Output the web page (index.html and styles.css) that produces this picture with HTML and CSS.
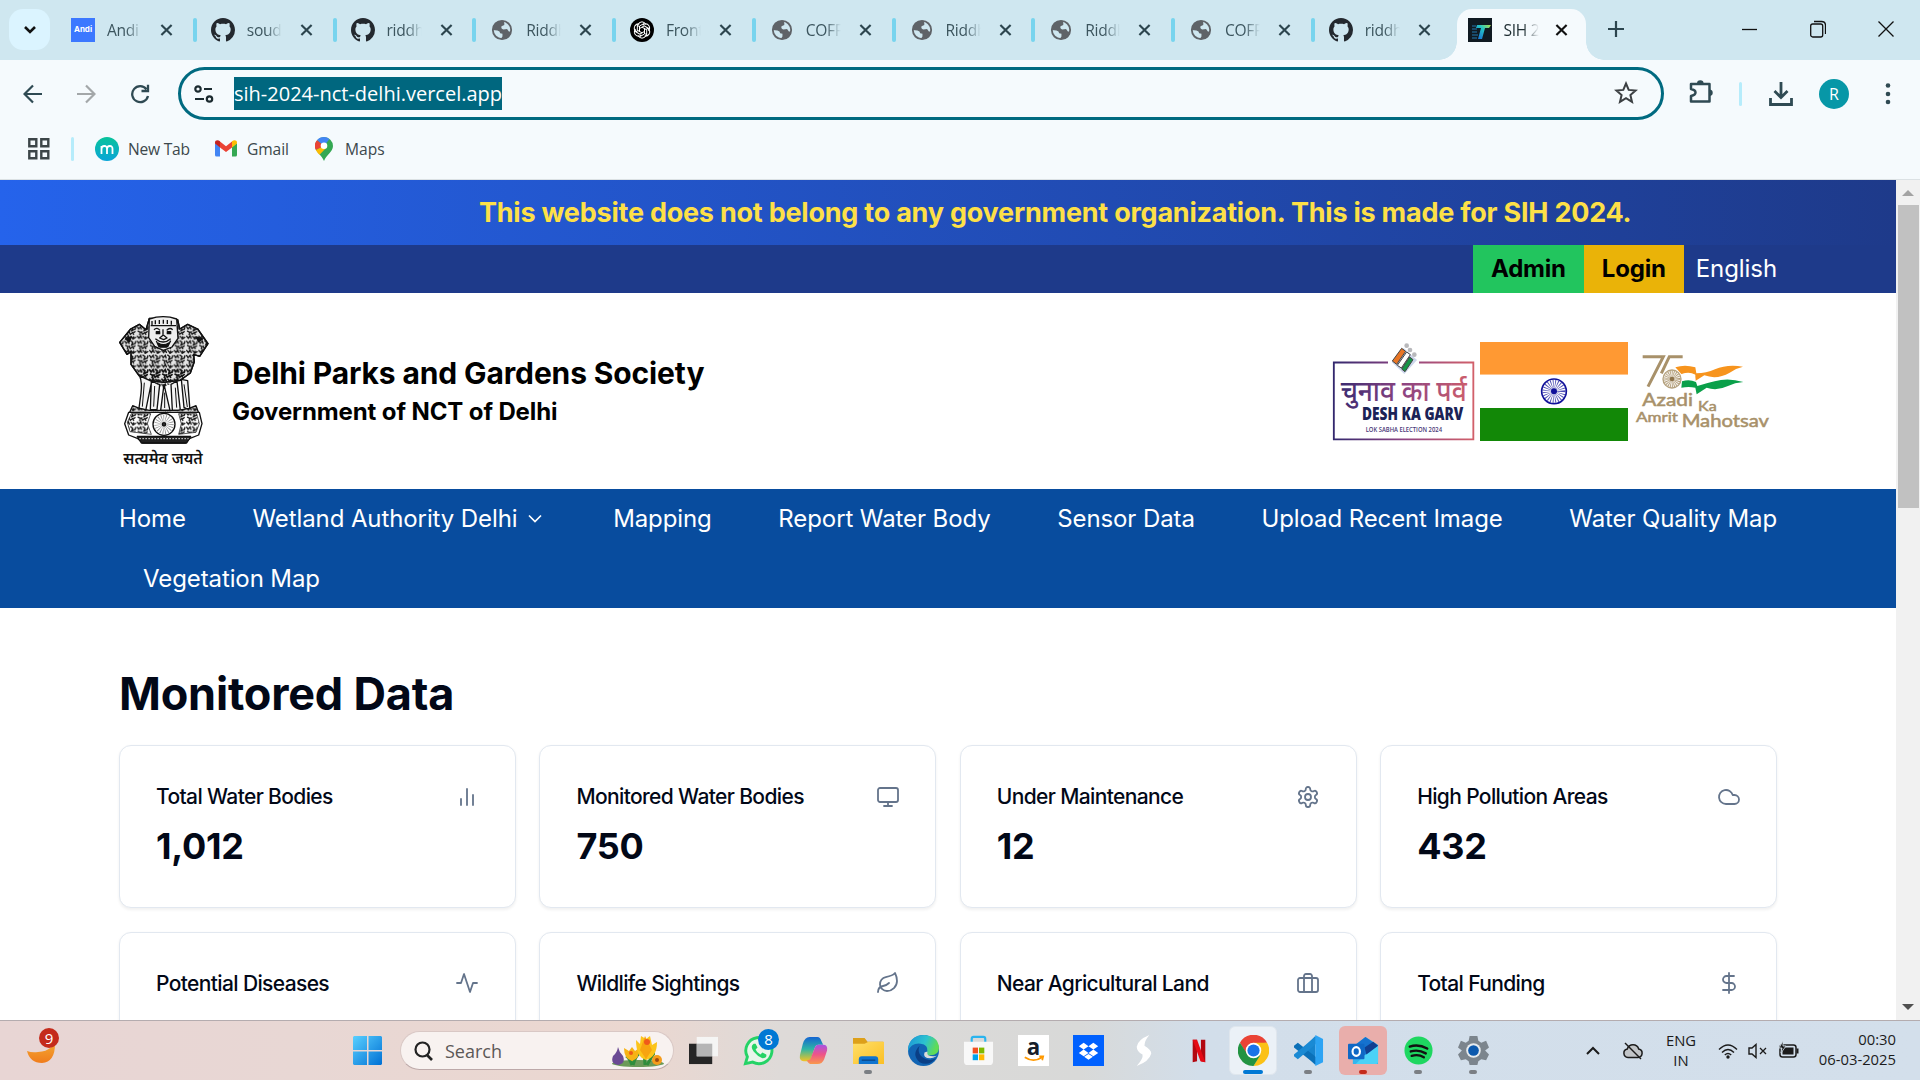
FILE: index.html
```html
<!DOCTYPE html>
<html lang="en">
<head>
<meta charset="utf-8">
<title>SIH 2024</title>
<link rel="stylesheet" href="styles.css">
</head>
<body>
<svg class="defs" aria-hidden="true">
  <defs>
    <symbol id="close" viewBox="0 0 14 14"><path d="M1.500 1.500l11 11M12.500 1.500l-11 11" stroke="currentColor" stroke-width="2.300" fill="none"/></symbol>
    <symbol id="github" viewBox="0 0 16 16"><path fill="#24292f" d="M8 0C3.580 0 0 3.580 0 8c0 3.540 2.290 6.530 5.470 7.590.4.070.55-.17.55-.38 0-.19-.01-.82-.01-1.490-2.010.37-2.530-.49-2.690-.94-.09-.23-.48-.94-.82-1.130-.28-.15-.68-.52-.01-.53.63-.01 1.080.58 1.230.82.72 1.210 1.870.87 2.330.66.070-.52.28-.87.51-1.070-1.780-.2-3.640-.89-3.640-3.950 0-.87.31-1.590.82-2.150-.08-.2-.36-1.020.08-2.120 0 0 .67-.21 2.200.82.64-.18 1.320-.27 2-.27s1.360.09 2 .27c1.530-1.040 2.200-.82 2.200-.82.44 1.100.16 1.920.08 2.120.51.56.82 1.270.82 2.150 0 3.070-1.870 3.750-3.650 3.950.29.25.54.73.54 1.480 0 1.070-.01 1.930-.01 2.200 0 .21.15.46.55.38A8.010 8.010 0 0 0 16 8c0-4.420-3.580-8-8-8z"/></symbol>
    <symbol id="globe" viewBox="0 0 24 24"><circle cx="12" cy="12" r="10" fill="none" stroke="#5f6368" stroke-width="2"/><path fill="#5f6368" d="M14 2C6 1 2 6.500 2 12l5 .5q3 .5 3 3l2.500.5v3l-2 3q10 1 11.500-8l-2.500-.5-2-2.500-4 .5q-3-1-2-3.500l3-1.500V4.500z"/></symbol>
    <linearGradient id="g-win" x1="0" y1="0" x2="1" y2="1"><stop offset="0" stop-color="#5ad0ff"/><stop offset="1" stop-color="#0070d4"/></linearGradient>
    <linearGradient id="g-vote" gradientUnits="userSpaceOnUse" x1="40" y1="0" x2="462" y2="0"><stop offset="0" stop-color="#33286e"/><stop offset=".5" stop-color="#8d4482"/><stop offset="1" stop-color="#d2606a"/></linearGradient>
    <linearGradient id="g-moon" x1="0" y1="0" x2="0" y2="1"><stop offset="0" stop-color="#f4b53a"/><stop offset="1" stop-color="#f07c1c"/></linearGradient>
    <linearGradient id="g-m" x1="0" y1="0" x2="0" y2="1"><stop offset="0" stop-color="#08c39b"/><stop offset="1" stop-color="#0aa5d8"/></linearGradient>
    <linearGradient id="g-t" x1="0" y1="1" x2="1" y2="0"><stop offset="0" stop-color="#1767d8"/><stop offset=".6" stop-color="#25c5c4"/><stop offset="1" stop-color="#b7e243"/></linearGradient>
    <linearGradient id="g-cop1" x1="0" y1="0" x2="0" y2="1"><stop offset="0" stop-color="#1464d2"/><stop offset=".5" stop-color="#2eb5a5"/><stop offset="1" stop-color="#f2c424"/></linearGradient>
    <linearGradient id="g-cop2" x1="0" y1="0" x2="0" y2="1"><stop offset="0" stop-color="#a654e4"/><stop offset=".5" stop-color="#ee5389"/><stop offset="1" stop-color="#f99a4b"/></linearGradient>
    <linearGradient id="g-edge" x1="0" y1="0" x2="1" y2=".3"><stop offset="0" stop-color="#1b93d8"/><stop offset=".6" stop-color="#2cc3cf"/><stop offset="1" stop-color="#5fdc55"/></linearGradient>
    <linearGradient id="g-fold" x1="0" y1="0" x2="1" y2="1"><stop offset="0" stop-color="#ffdf68"/><stop offset="1" stop-color="#fbbf24"/></linearGradient>
    <pattern id="fur" width="37" height="43" patternUnits="userSpaceOnUse"><path d="M1 3l5 8 6-7 3 9M18 2l7 6-3 8 9-4M34 4l-2 9M3 17l8 4-2 8M14 18l4 9 7-6 3 8M33 18l-5 4M1 31l6 8 5-8 4 9M19 32l6 7M28 33l-2 8 9-6" fill="none" stroke="#111" stroke-width="4"/></pattern>
  </defs>
</svg>

<div class="window">
  <header class="tabstrip">
    <button class="tab-search"><svg width="14" height="10" viewBox="0 0 14 10"><path d="M2 2l5 5 5-5" fill="none" stroke="#111" stroke-width="2.600"/></svg></button>
    <div class="tabs">
      <div class="tab"><span class="fav andi">Andi</span><span class="tab-title">Andi -</span><svg class="x"><use href="#close"/></svg></div>
      <div class="tab"><svg class="fav"><use href="#github"/></svg><span class="tab-title">soudeep</span><svg class="x"><use href="#close"/></svg></div>
      <div class="tab"><svg class="fav"><use href="#github"/></svg><span class="tab-title">riddhi</span><svg class="x"><use href="#close"/></svg></div>
      <div class="tab"><svg class="fav globe"><use href="#globe"/></svg><span class="tab-title">Riddhi</span><svg class="x"><use href="#close"/></svg></div>
      <div class="tab"><svg class="fav" viewBox="0 0 24 24"><circle cx="12" cy="12" r="12" fill="#000"/><g fill="none" stroke="#fff" stroke-width="1"><path id="petal" d="M8 9V7q.5-3 4-3.200 3 .2 4 3M9.500 13.500V8l5-2.800"/><use href="#petal" transform="rotate(60 12 12)"/><use href="#petal" transform="rotate(120 12 12)"/><use href="#petal" transform="rotate(180 12 12)"/><use href="#petal" transform="rotate(240 12 12)"/><use href="#petal" transform="rotate(300 12 12)"/></g></svg><span class="tab-title">Fronte</span><svg class="x"><use href="#close"/></svg></div>
      <div class="tab"><svg class="fav globe"><use href="#globe"/></svg><span class="tab-title">COFFEE</span><svg class="x"><use href="#close"/></svg></div>
      <div class="tab"><svg class="fav globe"><use href="#globe"/></svg><span class="tab-title">Riddhi</span><svg class="x"><use href="#close"/></svg></div>
      <div class="tab"><svg class="fav globe"><use href="#globe"/></svg><span class="tab-title">Riddhi</span><svg class="x"><use href="#close"/></svg></div>
      <div class="tab"><svg class="fav globe"><use href="#globe"/></svg><span class="tab-title">COFFEE</span><svg class="x"><use href="#close"/></svg></div>
      <div class="tab"><svg class="fav"><use href="#github"/></svg><span class="tab-title">riddhi</span><svg class="x"><use href="#close"/></svg></div>
      <div class="tab active"><svg class="fav" viewBox="0 0 24 24"><rect width="24" height="24" fill="#101a22"/><path d="M9 7h14l-2 3h-4l-3 11h-4l3-11H8z" fill="url(#g-t)"/><path d="M4 8h4M4 11h5M4 14h5M4 17h6M4 20h5" stroke="#1c5a80" stroke-width="1.500"/></svg><span class="tab-title">SIH 2024</span><svg class="x"><use href="#close"/></svg></div>
    </div>
    <svg class="plus" width="16" height="16" viewBox="0 0 16 16"><path d="M8 0v16M0 8h16" stroke="#2c454e" stroke-width="2.200"/></svg>
    <div class="win-controls">
      <svg width="16" height="16" viewBox="0 0 16 16"><path d="M0 8.500h15" stroke="#111" stroke-width="1.300"/></svg>
      <svg width="16" height="18" viewBox="0 0 16 18"><rect x=".7" y="4" width="12" height="13" rx="2" fill="none" stroke="#111" stroke-width="1.300"/><path d="M4 1.500h7.500q4 0 4 4V14" fill="none" stroke="#111" stroke-width="1.300"/></svg>
      <svg width="16" height="16" viewBox="0 0 16 16"><path d="M.5.5l15 15M15.500.5l-15 15" stroke="#111" stroke-width="1.300"/></svg>
    </div>
  </header>

  <div class="toolbar">
    <svg class="back" width="20" height="20" viewBox="0 0 20 20"><path d="M19 10H2M10 1.500L1.500 10l8.500 8.500" fill="none" stroke="#2f4a53" stroke-width="2.200"/></svg>
    <svg class="fwd" width="20" height="20" viewBox="0 0 20 20"><path d="M1 10h17M10 1.500l8.500 8.500-8.500 8.500" fill="none" stroke="#a3a7a9" stroke-width="2.200"/></svg>
    <svg class="reload" width="20" height="20" viewBox="0 0 20 20"><path d="M16.500 5.200A8 8 0 1 0 18 12M18 .8V7h-6.500" fill="none" stroke="#2f4a53" stroke-width="2.300"/></svg>
    <div class="omnibox">
      <svg width="20" height="18" viewBox="0 0 20 18"><g fill="none" stroke="#1c2b30" stroke-width="2.200"><circle cx="4" cy="4" r="2.700"/><path d="M10 4h8M1 14h9"/><circle cx="15.500" cy="14" r="2.700"/></g></svg>
      <span class="url">sih-2024-nct-delhi.vercel.app</span>
      <svg class="star" width="24" height="23" viewBox="0 0 24 23"><path d="M12 2.500l2.700 6.400 6.900.6-5.200 4.500 1.600 6.800-6-3.600-6 3.600L7.600 14 2.400 9.500l6.900-.6z" fill="none" stroke="#3c4043" stroke-width="2"/></svg>
    </div>
    <svg class="puzzle" width="26" height="26" viewBox="0 0 26 26"><path d="M2 5h18.500v17.500H2v-5.500q4.500-1 4.500-3.500T2 10z" fill="none" stroke="#2f4a53" stroke-width="2.500" stroke-linejoin="round"/><path d="M8 4.500a3.300 3.300 0 0 1 6.600 0zM21 10.500a3.300 3.300 0 0 1 0 6.500z" fill="#2f4a53"/></svg>
    <i class="vsep"></i>
    <svg class="download" width="24" height="24" viewBox="0 0 24 24"><path d="M12 0v15M5.500 9l6.500 6.500L18.500 9M1.500 16v6.500h21V16" fill="none" stroke="#2f4a53" stroke-width="2.800"/></svg>
    <span class="avatar">R</span>
    <svg class="dots" width="6" height="24" viewBox="0 0 6 24"><g fill="#2f4a53"><circle cx="3" cy="3.500" r="2.300"/><circle cx="3" cy="12" r="2.300"/><circle cx="3" cy="20" r="2.300"/></g></svg>
  </div>

  <div class="bookmarks">
    <svg width="22" height="22" viewBox="0 0 22 22"><path d="M1.300 1.300h7v7h-7zM13.300 1.300h7v7h-7zM1.300 13.300h7v7h-7zM13.300 13.300h7v7h-7z" fill="none" stroke="#3c4548" stroke-width="2.400"/></svg>
    <i class="vsep"></i>
    <a class="bm bm-new"><svg width="24" height="24" viewBox="0 0 24 24"><circle cx="12" cy="12" r="12" fill="url(#g-m)"/><path d="M6.500 17v-8M6.500 12q0-3 2.800-3t2.700 3v5M12 12q0-3 2.800-3t2.700 3v5" fill="none" stroke="#fff" stroke-width="1.800"/></svg>New Tab</a>
    <a class="bm bm-gmail"><svg width="22" height="17" viewBox="0 0 22 17"><path d="M0 3v12q0 1.500 1.500 1.500H5V7z" fill="#4285f4"/><path d="M22 3v12q0 1.500-1.500 1.500H17V7z" fill="#34a853"/><path d="M5 1.500l6 4.700 6-4.700V7.500l-6 4.600-6-4.600z" fill="#ea4335"/><path d="M0 3.500V2.500C0 0 3-.5 5 1.300V7.500z" fill="#c5221f"/><path d="M22 3.500V2.500C22 0 19-.5 17 1.300V7.500z" fill="#fbbc04"/></svg>Gmail</a>
    <a class="bm bm-maps"><svg width="18" height="24" viewBox="0 0 18 24"><path d="M9 0a9 9 0 0 0-9 9c0 6 7 9 9 15 2-6 9-9 9-15a9 9 0 0 0-9-9z" fill="#34a853"/><path d="M9 0a9 9 0 0 0-7 3.300L9 9l5.500-7A9 9 0 0 0 9 0z" fill="#4285f4"/><path d="M2 3.300A9 9 0 0 0 .8 13L9 9z" fill="#ea4335"/><path d="M.8 13q1.500 2.700 3.700 4.800L12 10 9 9z" fill="#fbbc04"/><circle cx="9" cy="8.800" r="3.300" fill="#fff"/></svg>Maps</a>
  </div>

  <div class="viewport">
    <main class="page">
      <div class="marquee"><span>This website does not belong to any government organization. This is made for SIH 2024.</span></div>
      <div class="topbar"><a class="admin">Admin</a><a class="login">Login</a><a class="lang">English</a></div>
      <div class="brand">
        <svg class="emblem" width="90" height="150" viewBox="21 15 270 450">
          <g stroke="#111" stroke-width="4" stroke-linejoin="round">
            <path fill="#e4e4e4" d="M112 22l-10 34-20-16-26 14-33 40 22 36 12-8v38l24 34 30 14 44 6 50-6 30-22 12-34-2-22 18 6 25-38-31-44-30-14-24 14-6-28z"/>
            <path fill="url(#fur)" d="M112 22l-10 34-20-16-26 14-33 40 22 36 12-8v38l24 34 30 14 44 6 50-6 30-22 12-34-2-22 18 6 25-38-31-44-30-14-24 14-6-28z"/>
            <path fill="#eee" d="M112 24q42-14 82 0l4 58-18 26-26 10-26-12-18-26z"/>
            <path fill="none" d="M120 30v12M130 28v12M142 27v12M154 26v12M166 27v12M178 29v12M116 44h76M126 56q9-9 18 2M164 58q9-10 18-2M153 55v18l-10 8 12 5 10-5-10-8M130 83q24 20 46 0M133 90l8 17h26l9-18"/>
            <path fill="#111" d="M133 62h10v6h-10zM166 62h10v6h-10zM138 96q17 10 32 0l-6 12h-20zM40 84l18-6-6 14zM272 84l-20-6 8 14z"/>
            <path fill="#f4f4f4" d="M83 195q8 20 4 52l-6 44 20 8 18-88zM118 210l-3 86h20l8-75zM156 220l-10 78h28zM177 220l4 78h24l-10-88zM208 205l8 84 18 10-7-90z"/>
            <path fill="none" stroke-width="3" d="M97 215l-6 72M128 225l-3 62M158 245v46M190 230l4 60M216 220l10 68"/>
            <path fill="url(#fur)" d="M84 184l30 24 38 22 42-20 34-26-10-14H92z" stroke="none"/>
            <path fill="#ddd" d="M62 284l20 8 30 6h86l34-6 20-8 8 22H52z"/>
            <path fill="url(#fur)" stroke="none" d="M62 284l50 14h86l54-14 8 22H52z"/>
            <path fill="#fff" d="M50 304h212l8 34-10 34-26 10-14 14H92l-16-14-26-10-12-34z"/>
            <path fill="url(#fur)" d="M58 308h58l-10 30 12 32-64-8-8-28zM200 308h54l8 30-10 26-52 6 8-32z" stroke-width="2"/>
            <circle cx="156" cy="340" r="33" fill="#fff"/>
            <circle cx="156" cy="340" r="18" fill="none" stroke-width="22" stroke="#888" stroke-dasharray="1.800 4"/>
            <circle cx="156" cy="340" r="5" fill="#333"/>
            <path fill="#222" d="M76 376h160l-12 20H88z"/>
            <path fill="none" stroke="#ddd" stroke-width="3" stroke-dasharray="5 4" d="M82 383h148"/>
          </g>
          <text x="34" y="460" class="motto" textLength="238" lengthAdjust="spacingAndGlyphs">सत्यमेव जयते</text>
        </svg>
        <div class="brand-text"><h1>Delhi Parks and Gardens Society</h1><h2>Government of NCT of Delhi</h2></div>
        <div class="logos">
          <svg width="144" height="99" viewBox="36 36 432 297">
            <path d="M204 97.500H41.500V328H460V97.500H297" fill="none" stroke="url(#g-vote)" stroke-width="5.500"/>
            <path d="M215 96l36-42 40 36-38 42z" fill="#cbd5ea"/><g stroke="#444" stroke-width="3"><path d="M217 93l28-38 12 9-27 39z" fill="#e87524"/><path d="M232 106l28-40 11 8-27 40z" fill="#fff"/><path d="M245 117l24-36 10 8-24 36z" fill="#159447"/></g>
            <g fill="#b8b8bb"><circle cx="260" cy="47" r="7"/><circle cx="270" cy="60" r="7"/><circle cx="283" cy="74" r="7"/></g>
            <text x="62" y="212" class="hindi" fill="url(#g-vote)" textLength="378" lengthAdjust="spacingAndGlyphs">चुनाव का पर्व</text>
            <text x="126" y="271" class="garv" textLength="304" lengthAdjust="spacingAndGlyphs">DESH KA GARV</text>
            <text x="137" y="307" class="sabha" textLength="229" lengthAdjust="spacingAndGlyphs">LOK SABHA ELECTION 2024</text>
          </svg>
          <svg width="148" height="99" viewBox="0 0 444 297"><path fill="#ff9933" d="M0 0h444v98H0z"/><path fill="#fff" d="M0 98h444v100H0z"/><path fill="#128807" d="M0 198h444v99H0z"/><g fill="none" stroke="#10109a"><circle cx="222" cy="148" r="37" stroke-width="5"/><circle cx="222" cy="148" r="19" stroke-width="31" stroke-opacity=".75" stroke-dasharray="1.800 3.180"/></g><circle cx="222" cy="148" r="9" fill="#10109a"/></svg>
          <svg width="144" height="99" viewBox="936 36 432 297">
            <g fill="none" stroke="#a8916a" stroke-width="9"><path d="M968 80h62l-46 90"/><path d="M1088 80h-40l-24 50" /></g>
            <path d="M1066 112q28-10 60 0l3 18q30 0 56-12 36-16 84-8-20 4-40 18-38 22-76 8l-26 16-3-18q-22-6-40-2z" fill="#f7941d"/>
            <path d="M1086 132q22-8 40 2v16q-20-4-38 4z" fill="#fff"/>
            <path d="M1086 154q22-8 42 2l4 12q26-8 52-14 40-12 86 2-26 2-46 12-34 16-64 5l-30 20-4-20q-20-4-42 0z" fill="#0aa04a"/>
            <circle cx="1056" cy="147" r="27" fill="#f3efe8" stroke="#b5a27f" stroke-width="4"/><circle cx="1056" cy="147" r="14" fill="none" stroke="#a8916a" stroke-width="22" stroke-dasharray="1.500 2.500"/><circle cx="1056" cy="147" r="7" fill="#8d734b"/>
            <g class="azadi"><text x="967" y="229" font-size="50" textLength="152" lengthAdjust="spacingAndGlyphs">Azadi</text><text x="1134" y="243" font-size="40" textLength="56" lengthAdjust="spacingAndGlyphs">Ka</text><text x="948" y="276" font-size="42" textLength="126" lengthAdjust="spacingAndGlyphs">Amrit</text><text x="1085" y="291" font-size="50" textLength="262" lengthAdjust="spacingAndGlyphs">Mahotsav</text></g>
          </svg>
        </div>
      </div>
      <nav class="nav">
        <div class="nav-row"><a>Home</a><a>Wetland Authority Delhi <svg class="chev" width="14" height="9" viewBox="0 0 14 9"><path d="M1 1.500l6 6 6-6" fill="none" stroke="#fff" stroke-width="1.700"/></svg></a><a>Mapping</a><a>Report Water Body</a><a>Sensor Data</a><a>Upload Recent Image</a><a>Water Quality Map</a></div>
        <div class="nav-row second"><a>Vegetation Map</a></div>
      </nav>
      <section class="data">
        <h2>Monitored Data</h2>
        <div class="cards">
          <article class="card"><div class="card-head"><h3>Total Water Bodies</h3><svg viewBox="0 0 24 24"><path d="M18 20V10M12 20V4M6 20v-6"/></svg></div><p>1,012</p></article>
          <article class="card"><div class="card-head"><h3>Monitored Water Bodies</h3><svg viewBox="0 0 24 24"><rect x="2" y="3" width="20" height="14" rx="2"/><path d="M8 21h8M12 17v4"/></svg></div><p>750</p></article>
          <article class="card"><div class="card-head"><h3>Under Maintenance</h3><svg viewBox="0 0 24 24"><path d="M12.220 2h-.44a2 2 0 0 0-2 2v.18a2 2 0 0 1-1 1.730l-.43.25a2 2 0 0 1-2 0l-.15-.08a2 2 0 0 0-2.730.73l-.22.38a2 2 0 0 0 .73 2.730l.15.1a2 2 0 0 1 1 1.720v.51a2 2 0 0 1-1 1.740l-.15.09a2 2 0 0 0-.73 2.730l.22.38a2 2 0 0 0 2.730.73l.15-.08a2 2 0 0 1 2 0l.43.25a2 2 0 0 1 1 1.730V20a2 2 0 0 0 2 2h.44a2 2 0 0 0 2-2v-.18a2 2 0 0 1 1-1.730l.43-.25a2 2 0 0 1 2 0l.15.080a2 2 0 0 0 2.730-.73l.22-.39a2 2 0 0 0-.73-2.730l-.15-.08a2 2 0 0 1-1-1.740v-.5a2 2 0 0 1 1-1.740l.15-.09a2 2 0 0 0 .73-2.730l-.22-.38a2 2 0 0 0-2.730-.73l-.15.08a2 2 0 0 1-2 0l-.43-.25a2 2 0 0 1-1-1.730V4a2 2 0 0 0-2-2z"/><circle cx="12" cy="12" r="3"/></svg></div><p>12</p></article>
          <article class="card"><div class="card-head"><h3>High Pollution Areas</h3><svg viewBox="0 0 24 24"><path d="M17.500 19H9a7 7 0 1 1 6.710-9h1.790a4.500 4.500 0 1 1 0 9z"/></svg></div><p>432</p></article>
          <article class="card"><div class="card-head"><h3>Potential Diseases</h3><svg viewBox="0 0 24 24"><path d="M22 12h-4l-3 9L9 3l-3 9H2"/></svg></div><p>5</p></article>
          <article class="card"><div class="card-head"><h3>Wildlife Sightings</h3><svg viewBox="0 0 24 24"><path d="M11 20A7 7 0 0 1 9.800 6.100C15.500 5 17 4.480 19 2c1 2 2 4.180 2 8 0 5.500-4.780 10-10 10z"/><path d="M2 21c0-3 1.850-5.360 5.080-6C9.500 14.520 12 13 13 12"/></svg></div><p>89</p></article>
          <article class="card"><div class="card-head"><h3>Near Agricultural Land</h3><svg viewBox="0 0 24 24"><rect x="2" y="7" width="20" height="14" rx="2"/><path d="M16 21V5a2 2 0 0 0-2-2h-4a2 2 0 0 0-2 2v16"/></svg></div><p>8</p></article>
          <article class="card"><div class="card-head"><h3>Total Funding</h3><svg viewBox="0 0 24 24"><path d="M12 2v20M17 5H9.500a3.500 3.500 0 0 0 0 7h5a3.500 3.500 0 0 1 0 7H6"/></svg></div><p>₹20,000</p></article>
        </div>
      </section>
    </main>
    <aside class="scrollbar"><i class="arrow up"></i><i class="thumb"></i><i class="arrow down"></i></aside>
  </div>

  <footer class="taskbar">
    <div class="weather"><svg width="32" height="32" viewBox="0 0 32 32"><path d="M27 3Q28 18 11 19 5 20 0 18q3 12 15 12 13-1 13-19z" fill="url(#g-moon)"/></svg><span class="badge red">9</span></div>
    <div class="start"><svg width="29" height="29" viewBox="0 0 29 29"><path d="M1 0h13v14H0V1zM15.500 0H28l1 1v13H15.500zM0 15.500h14V29H1l-1-1zM15.500 15.500H29V28l-1 1H15.500z" fill="url(#g-win)"/></svg></div>
    <div class="search"><svg width="19" height="20" viewBox="0 0 19 20"><circle cx="8.500" cy="8.500" r="7" fill="none" stroke="#222" stroke-width="2.200"/><path d="M13 14l5 5" stroke="#222" stroke-width="2.600"/></svg><span>Search</span>
      <svg class="flowers" width="54" height="32" viewBox="0 0 54 32"><ellipse cx="27" cy="28.500" rx="26" ry="3.500" fill="#6b9a58"/><path d="M21 30q-3-8-6-9M22 30q3-10 6-11M34 30q-1-14 0-14M36 30q7-12 8-12" stroke="#2f8d3c" stroke-width="3" fill="none"/><path d="M7 12q-1 6-5 9-3 8 5 9 8-1 5-9-4-4-5-9z" fill="#6b4a94"/><path d="M13 13q0 11 8 13 8-2 7-13l-4 3-3-4-3 4z" fill="#f7b314"/><path d="M25 5q0 17 10 20 11-3 11-18l-5 3-2-9-4 3-5-3-1 8z" fill="#fcc41a"/><path d="M34 1l-5 14 6 9 6-9z" fill="#f7a410"/><circle cx="36" cy="7" r="3" fill="#f05a1a"/><circle cx="20" cy="18" r="2" fill="#ee5a18"/><circle cx="46" cy="25" r="5" fill="#f59c1c"/><circle cx="46" cy="25" r="2" fill="#9c4a10"/></svg>
    </div>
    <div class="apps">
      <span class="app"><svg viewBox="0 0 32 32"><path d="M1 9h24v21H1z" fill="#262626"/><path d="M9 2h22v20H9z" fill="#f6f6f6" fill-opacity=".93"/><path d="M9 9h16v13H9z" fill="#b5b5b5"/></svg></span>
      <span class="app"><svg viewBox="0 0 32 32"><path d="M2.500 29.500l2-7A13.500 13.500 0 1 1 10 28z" fill="#e8f5ea" stroke="#25d366" stroke-width="3"/><path d="M11 9q-4 3 0 8t9 7q5 0 4-4l-4-2-2 2q-4-2-5-5l2-2-2-4z" fill="#25d366"/></svg><b class="badge blue">8</b></span>
      <span class="app"><svg viewBox="0 0 32 32"><path d="M12 2h8q3 0 4 4l2 4h-5q-3 0-4 4l-3 9q-1 4-4 4H6q-5 0-4-6l3-12Q7 2 12 2z" fill="url(#g-cop1)"/><path d="M21 10h5q5 0 4 6l-3 9q-2 5-7 5h-6q-3 0-5-4h1q3 0 4-4l3-8q1-4 4-4z" fill="url(#g-cop2)"/></svg></span>
      <span class="app open"><svg viewBox="0 0 32 32"><path d="M0 3h12l3 4h16v10H0z" fill="#dda01a"/><path d="M0 9h12l4-2h16v23H0z" fill="url(#g-fold)"/><path d="M6 30v-5q0-3 3-3h14q3 0 3 3v5z" fill="#0f74cf"/><path d="M9 26h14" stroke="#0a4b8f" stroke-width="1.500"/></svg></span>
      <span class="app"><svg viewBox="0 0 32 32"><circle cx="16" cy="16" r="16" fill="#1265b4"/><path d="M0 14Q2 0 17 0q14 1 15 13 0 8-9 8-5 0-3-4 1-7-7-8Q3 8 0 17z" fill="url(#g-edge)"/><path d="M12 11q-9 9 0 17 9 5 17-4-8 4-14-1-6-5-3-12z" fill="#0a3f86"/><path d="M20 17q-1 5 6 5 4 0 6-3-3 4-9 5-8 0-6-6z" fill="#dcdcdb"/></svg></span>
      <span class="app"><svg viewBox="0 0 32 32"><path d="M9 8V4q0-2 2-2h10q2 0 2 2v4" fill="none" stroke="#2ab4ee" stroke-width="2.200"/><path d="M1 7h30v20q0 4-4 4H5q-4 0-4-4z" fill="#f8f8f8"/><path d="M10 13h5.500v6H10z" fill="#f25022"/><path d="M16.500 13H22v6h-5.500z" fill="#7fba00"/><path d="M10 20h5.500v6H10z" fill="#00a4ef"/><path d="M16.500 20H22v6h-5.500z" fill="#ffb900"/></svg></span>
      <span class="app"><svg viewBox="0 0 32 32"><path d="M0 0h32v32H0z" fill="#fff"/><text x="9" y="21" class="amazon">a</text><path d="M7 23q9 6 18 0M22 22l4 0-1 4" fill="none" stroke="#ff9900" stroke-width="1.800"/></svg></span>
      <span class="app"><svg viewBox="0 0 32 32"><path d="M0 0h32v32H0z" fill="#0061ff"/><path d="M11 8l5 3.500-5 3.500-5-3.500zM21 8l5 3.500-5 3.500-5-3.500zM11 15l5 3.500-5 3.500-5-3.500zM21 15l5 3.500-5 3.500-5-3.500zM16 19.500l4.500 3-4.500 3-4.500-3z" fill="#fff"/></svg></span>
      <span class="app"><svg viewBox="0 0 32 32"><path d="M22 0Q10 5 9 12q0 5 6 8 1 4-6 12 13-5 15-13 0-4-7-8 0-5 5-11z" fill="#fff"/></svg></span>
      <span class="app"><svg viewBox="0 0 32 32"><path d="M10 5h4.500v22L10 28zM18.500 5H23v23l-4.500-1z" fill="#b20710"/><path d="M10 5h4.500L23 28l-5-1z" fill="#e50914"/></svg></span>
      <span class="app current"><svg viewBox="0 0 32 32"><path d="M2 8A16 16 0 0 1 30 8L16 9 9 20z" fill="#ea4335"/><path d="M30 8a16 16 0 0 1-14 24l7-12-7-12z" fill="#fbc116"/><path d="M2 8a16 16 0 0 0 14 24l7-11-12 1z" fill="#229342"/><circle cx="16" cy="16" r="8" fill="#fff"/><circle cx="16" cy="16" r="6.300" fill="#1a73e8"/></svg></span>
      <span class="app open"><svg viewBox="0 0 32 32"><path d="M23 1v30L8 16z" fill="#1684ce"/><path d="M1 11l4-3 19 15v8L1 13z" fill="#0b70b8"/><path d="M1 22l4 3L24 9V1L1 20z" fill="#1a8ad4"/><path d="M23 0l8 4v24l-8 4z" fill="#2da4f4"/></svg></span>
      <span class="app alert"><svg viewBox="0 0 32 32"><path d="M5 12L18 2l13 8v20H5z" fill="#35b6ee"/><path d="M5 12L18 2l13 9-14 10z" fill="#1572cf"/><path d="M16 22l15-11v16q0 3-3 3H8z" fill="#4bd2f7"/><path d="M17 13l9-6 5 4-12 9z" fill="#103f91"/><rect y="9" width="17" height="16" rx="1" fill="#0f68c5"/><ellipse cx="8.500" cy="17" rx="3.800" ry="4.500" fill="none" stroke="#fff" stroke-width="2.200"/></svg></span>
      <span class="app open"><svg viewBox="0 0 32 32"><circle cx="16" cy="16" r="14.500" fill="#1ed760"/><path d="M7 12q9-3 18 2M8 17q8-2.500 15.500 2M9 21.500q7-2 12.500 1.500" fill="none" stroke="#121212" stroke-width="2.500" stroke-linecap="round"/></svg></span>
      <span class="app open"><svg viewBox="0 0 32 32"><path d="M12 1h8l1 5 3 2 5-2 3 7-4 3 4 4-3 6-5-1-3 2-1 4h-8l-1-4-3-2-5 1-3-6 4-4-4-3 3-7 5 2 3-2z" fill="#7c858d"/><circle cx="16" cy="16" r="7.500" fill="#e7ebee"/><circle cx="16" cy="16" r="5.500" fill="#0c59ad"/></svg></span>
    </div>
    <div class="tray">
      <svg class="t-chev" width="14" height="9" viewBox="0 0 14 9"><path d="M1 8l6-6 6 6" fill="none" stroke="#1b1b1b" stroke-width="2"/></svg>
      <svg class="t-cloud" width="22" height="18" viewBox="0 0 22 18"><path d="M6 15.500H16a4.300 4.300 0 0 0 .7-8.500A6 6 0 0 0 5.300 7a4.300 4.300 0 0 0 .7 8.500z" fill="#c2c5c8" stroke="#1b1b1b" stroke-width="1.500"/><path d="M3 1l16 16" stroke="#1b1b1b" stroke-width="1.500"/></svg>
      <div class="ime"><span>ENG</span><span>IN</span></div>
      <svg class="t-wifi" width="20" height="16" viewBox="0 0 20 16"><path d="M1 6.500q9-9 18 0M4 9.500q6-6 12 0M6.800 12q3.200-3 6.400 0" fill="none" stroke="#1b1b1b" stroke-width="1.400"/><circle cx="10" cy="14" r="1.700" fill="#1b1b1b"/></svg>
      <svg class="t-vol" width="19" height="16" viewBox="0 0 19 16"><path d="M1 5v6h3l4 3.500v-13L4 5z" fill="none" stroke="#1b1b1b" stroke-width="1.400"/><path d="M12 5l6 6M18 5l-6 6" stroke="#1b1b1b" stroke-width="1.300"/></svg>
      <svg class="t-bat" width="21" height="17" viewBox="0 0 21 17"><rect x="2" y="4" width="16" height="12" rx="2.500" fill="none" stroke="#1b1b1b" stroke-width="1.500"/><rect x="4.500" y="6.500" width="11" height="7" fill="#1b1b1b"/><path d="M18.500 7.500h2v5h-2z" fill="#1b1b1b"/><path d="M5 0L1 7h3l-1 5 5-7H5z" fill="#1b1b1b" stroke="#d3dfea" stroke-width=".8"/></svg>
      <div class="clock"><span>00:30</span><span>06-03-2025</span></div>
    </div>
  </footer>
</div>
</body>
</html>
```
FILE: styles.css
```css
* { box-sizing: border-box; margin: 0; padding: 0; }
body { font-family: "Open Sans", "Noto Sans", sans-serif; background: #fff; }
svg { display: block; flex: none; }
.defs { position: absolute; width: 0; height: 0; }
.window { width: 1920px; height: 1080px; display: flex; flex-direction: column; overflow: hidden; background: #f5fafd; }

/* tab strip */
.tabstrip { height: 60px; flex: none; background: #cfe7f0; display: flex; align-items: flex-start; }
.tab-search { width: 41px; height: 41px; margin: 9px 6px 0 9px; border: 0; border-radius: 14px; background: #dbf4ff; display: flex; align-items: center; justify-content: center; }
.tabs { display: flex; height: 60px; padding-top: 9px; }
.tab { position: relative; width: 139.75px; height: 51px; flex: none; display: flex; align-items: center; padding: 0 0 9px 15px; }
.tab:not(.active)::after { content: ""; position: absolute; right: -1px; top: 9px; width: 4px; height: 24px; border-radius: 2px; background: #78d4ee; }
.tab:nth-child(10)::after { display: none; }
.fav { width: 24px; height: 24px; flex: none; }
.fav.globe { padding: 1px; }
.andi { background: #3c78ff; color: #fff; font: 700 8px/22px "Inter", sans-serif; text-align: center; }
.tab-title { width: 35px; margin-left: 12px; overflow: hidden; white-space: nowrap; font-size: 15.6px; letter-spacing: -.3px; line-height: 24px; color: #3c555e; -webkit-mask-image: linear-gradient(90deg, #000 55%, transparent); mask-image: linear-gradient(90deg, #000 55%, transparent); }
.x { width: 13px; height: 14px; margin-left: 18px; color: #2c454e; }
.tab.active { width: 129px; margin-left: 3px; padding-left: 11px; background: #f5fafd; border-radius: 15px 15px 0 0; }
.tab.active::before, .tab.active::after { content: ""; position: absolute; bottom: 0; width: 18px; height: 18px; }
.tab.active::before { left: -18px; background: radial-gradient(circle at 0 0, transparent 17.5px, #f5fafd 18px); }
.tab.active::after { right: -18px; background: radial-gradient(circle at 100% 0, transparent 17.5px, #f5fafd 18px); }
.active .tab-title { color: #1d2c31; }
.active .x { color: #111; margin-left: 16px; }
.plus { margin: 21px 0 0 22px; }
.win-controls { display: flex; align-items: center; gap: 52px; margin: 20px 26px 0 auto; }

/* toolbar */
.toolbar { height: 67px; flex: none; display: flex; align-items: center; padding: 0 29px 0 23px; }
.fwd { margin-left: 33px; }
.reload { margin-left: 34px; }
.omnibox { width: 1486px; height: 53px; margin-left: 28px; border: 3px solid #006a80; border-radius: 27px; display: flex; align-items: center; padding: 0 23px 0 13px; }
.url { margin-left: 20px; width: 268px; height: 33px; line-height: 33px; font-size: 20px; color: #fff; background: #00677f; white-space: nowrap; }
.star { margin-left: auto; margin-bottom: 2px; }
.puzzle { margin: 0 0 4px 25px; }
.vsep { width: 3px; height: 24px; border-radius: 2px; background: #b6ecfb; flex: none; }
.toolbar .vsep { margin-left: 24px; }
.download { margin-left: 27px; }
.avatar { width: 30px; height: 30px; margin-left: 26px; border-radius: 50%; background: #0797a7; color: #fff; font-size: 16px; line-height: 30px; text-align: center; flex: none; }
.dots { margin-left: auto; }

.bookmarks { height: 53px; flex: none; display: flex; align-items: center; padding: 0 0 9px 28px; border-bottom: 1px solid #dbe1e4; font-size: 15.6px; color: #3c484c; }
.bookmarks .vsep { margin: 0 21px; }
.bm { display: flex; align-items: center; white-space: nowrap; }
.bm-new { gap: 9px; width: 120px; letter-spacing: -.25px; }
.bm-gmail { gap: 10px; width: 100px; letter-spacing: -.1px; }
.bm-maps { gap: 12px; }

/* page */
.viewport { height: 840px; flex: none; display: flex; overflow: hidden; background: #fff; }
.page { width: 1896px; flex: none; font-family: "Inter", sans-serif; color: #020817; }
.marquee { height: 65px; background: linear-gradient(90deg, #2563eb, #1e3a8a); color: #fde047; font-weight: 700; font-size: 27px; letter-spacing: -.23px; line-height: 65px; padding-left: 479px; white-space: nowrap; }
.topbar { height: 48px; background: #1e3a8a; display: flex; justify-content: flex-end; padding-right: 119px; font-size: 24px; line-height: 48px; color: #fff; letter-spacing: -.08px; }
.admin, .login { padding: 0 18px; font-weight: 700; color: #000; letter-spacing: -.2px; }
.admin { background: #22c55e; }
.login { background: #eab308; }
.lang { padding-left: 12px; }
.brand { height: 196px; display: flex; align-items: center; padding: 0 120px 0 119px; color: #000; }
.motto { font: 600 46px "Noto Sans Devanagari", "Noto Sans", sans-serif; fill: #111; }
.brand-text { margin-left: 23px; white-space: nowrap; }
.brand-text h1 { font-size: 30px; font-weight: 700; line-height: 42px; letter-spacing: -.13px; }
.brand-text h2 { font-size: 24px; font-weight: 700; line-height: 36px; letter-spacing: -.11px; }
.logos { display: flex; gap: 4px; margin-left: auto; }
.hindi { font: 500 84px "Noto Sans Devanagari", "Noto Sans", sans-serif; }
.garv { font: 800 50px "Open Sans", sans-serif; fill: #1b2256; }
.sabha { font: 600 21px "Open Sans", sans-serif; fill: #4a3a78; }
.azadi { font-family: "Lato", sans-serif; fill: #a8916a; stroke: #a8916a; stroke-width: 1.5; }
.nav { height: 119px; background: #084c9e; color: #fff; padding: 0 119px; font-size: 24px; letter-spacing: -.1px; }
.nav-row { height: 59.5px; display: flex; justify-content: space-between; align-items: center; white-space: nowrap; }
.nav-row a { display: flex; align-items: center; gap: 11px; }
.chev { margin-right: 4px; }
.nav-row.second { padding-left: 24px; }
.data { padding: 59px 119px 0; }
.data h2 { font-size: 45px; line-height: 54px; font-weight: 700; letter-spacing: -.2px; margin-bottom: 24px; }
.cards { display: grid; grid-template-columns: repeat(4, 1fr); gap: 24px 23.5px; }
.card { height: 162.5px; border: 1px solid #e2e8f0; border-radius: 12px; background: #fff; box-shadow: 0 1.5px 3px rgba(0, 0, 0, .06); padding: 34.5px 35.5px 0 36px; }
.card-head { height: 32px; display: flex; justify-content: space-between; align-items: center; }
.card-head h3 { font-size: 21px; font-weight: 500; letter-spacing: -.63px; white-space: nowrap; }
.card-head svg { width: 24px; height: 24px; fill: none; stroke: #64748b; stroke-width: 1.8; stroke-linecap: round; stroke-linejoin: round; }
.card p { font-size: 36px; line-height: 48px; font-weight: 700; margin-top: 9px; letter-spacing: -.25px; }
.card:nth-child(n+5) p { margin-top: 11.5px; }
.scrollbar { width: 24px; background: #f1f1f1; display: flex; flex-direction: column; align-items: center; }
.arrow { border: 6px solid transparent; }
.up { border-top: 0; border-bottom-color: #a3a3a3; margin: 10px 0 9px; }
.thumb { width: 21px; height: 303px; background: #c1c1c1; }
.down { border-bottom: 0; border-top-color: #505050; margin: auto 0 10px; }

/* taskbar */
.taskbar { height: 60px; flex: none; display: flex; align-items: center; border-top: 1px solid #b4acaf; color: #1b1b1b; background: linear-gradient(90deg, #e8d5d4 0, #e8d7d4 300px, #ebd7d0 640px, #dedad8 780px, #d8d9d8 1080px, #d2deea 1200px, #d3dfeb 1920px); }
.weather { position: relative; width: 32px; margin-left: 27px; margin-top: -4px; }
.badge { position: absolute; border-radius: 50%; width: 20px; height: 20px; color: #fff; font-size: 15px; line-height: 20px; text-align: center; font-weight: 400; }
.badge.red { background: #c42b1c; left: 12px; top: -5px; }
.badge.blue { background: #0078d4; right: 3px; top: 3px; width: 21px; height: 21px; line-height: 21px; }
.start { margin-left: 294px; }
.search { width: 274px; height: 39px; margin-left: 18px; border: 1px solid #d9c8c5; border-bottom-color: #bda9a9; border-radius: 20px; background: #f8f2f0; display: flex; align-items: center; padding: 0 8px 0 13px; font-size: 18px; color: #5c5857; }
.search span { margin-left: 12px; }
.flowers { margin-left: auto; }
.apps { display: flex; gap: 7px; margin-left: 5px; }
.app { position: relative; width: 48px; height: 49px; border-radius: 6px; display: flex; align-items: center; justify-content: center; }
.app > svg { width: 31px; height: 31px; margin-bottom: 1px; }
.open::after, .current::after, .alert::after { content: ""; position: absolute; bottom: 1px; left: 20px; width: 8px; height: 4px; border-radius: 2px; background: #7b7f84; }
.current { background: #ebf1f7; border: 1px solid #dfe6ed; }
.current::after { width: 20px; left: 13px; bottom: 0; background: #0078d4; }
.alert { background: #e9aeab; }
.alert::after { background: #c42b1c; }
.amazon { font: 700 23px "Open Sans", sans-serif; fill: #161e2a; }
.tray { display: flex; align-items: center; margin-left: auto; padding-right: 24px; font-size: 14.8px; }
.t-chev { margin-right: 22px; }
.ime { width: 40px; margin: 0 17px; text-align: center; display: flex; flex-direction: column; line-height: 20px; padding-bottom: 2px; }
.t-vol { margin-left: 10px; }
.t-bat { margin: 0 0 2px 11px; }
.clock { width: 97px; text-align: right; display: flex; flex-direction: column; line-height: 20px; padding-bottom: 3px; }
```
